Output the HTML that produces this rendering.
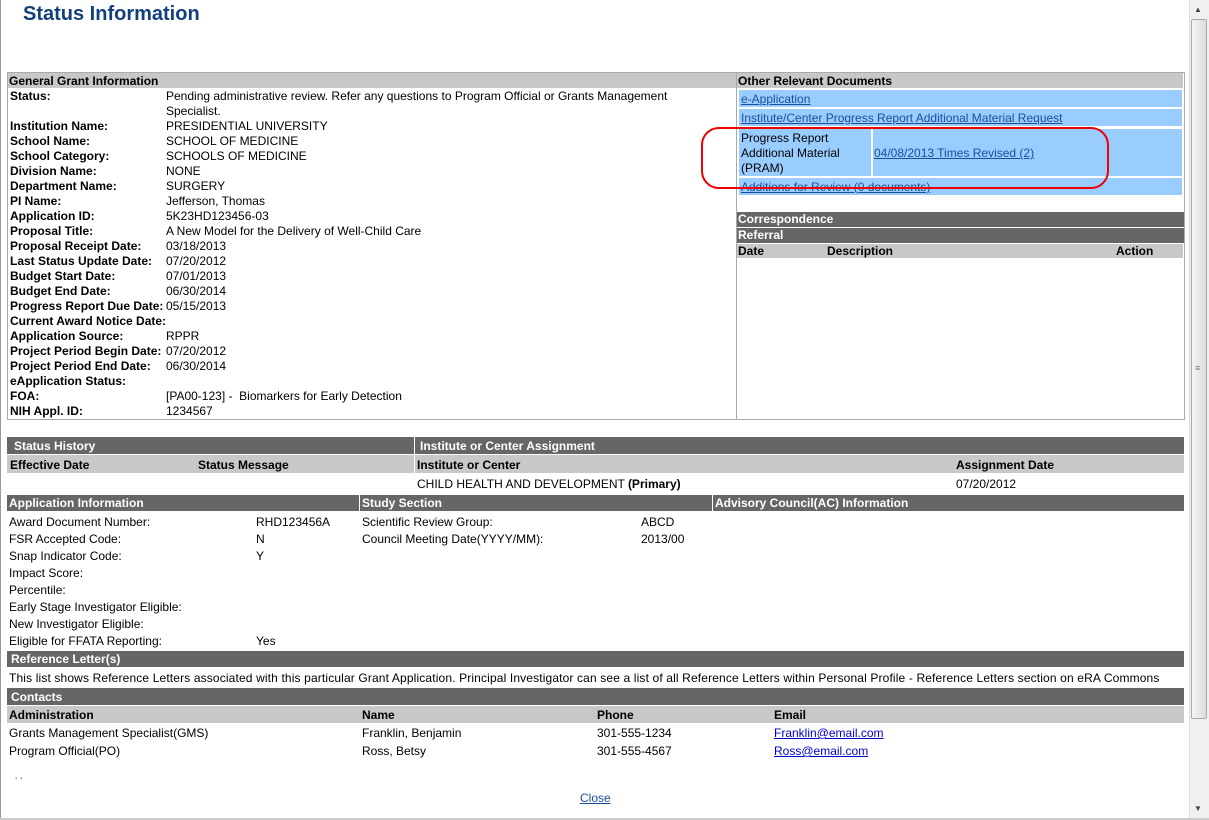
<!DOCTYPE html><html><head><style>
body{margin:0;width:1209px;height:820px;overflow:hidden;background:#fff;font-family:"Liberation Sans",Arial,sans-serif;font-size:12px;color:#000;position:relative}
.a{position:absolute;white-space:nowrap}
.b{font-weight:bold}
.lg{position:absolute;background:#c8c8c8}
.dg{position:absolute;background:#666;color:#fff;font-weight:bold}
.bl{position:absolute;background:#99ccff}
a{color:#1a4f9c;text-decoration:underline}
.lk{color:#0000cc}
</style></head><body>
<div class="a" style="left:0;top:0;width:1px;height:820px;background:#999"></div>
<div class="a" style="left:0;top:818px;width:1209px;height:2px;background:#ccc"></div>
<div class="a b" style="left:23px;top:3px;font-size:20px;color:#13407a">Status Information</div>
<div class="a" style="left:1189px;top:0;width:19px;height:818px;background:#f0f0f0;border-left:1px solid #ddd"></div>
<div class="a" style="left:1191px;top:19px;width:14px;height:698px;background:linear-gradient(90deg,#f4f4f4,#dcdcdc);border:1px solid #aaa;border-radius:2px"></div>
<div class="a" style="left:1194px;top:5px;font-size:8px;color:#444">▲</div>
<div class="a" style="left:1194px;top:804px;font-size:8px;color:#444">▼</div>
<div class="a" style="left:1195px;top:363px;font-size:9px;color:#777">≡</div>
<div class="a" style="left:7px;top:72px;width:1176px;height:346px;border:1px solid #aaa"></div>
<div class="a" style="left:736px;top:72px;width:1px;height:347px;background:#aaa"></div>
<div class="lg" style="left:8px;top:73px;width:728px;height:15px"></div>
<div class="lg" style="left:737px;top:73px;width:446px;height:15px"></div>
<div class="a b" style="left:9px;top:74px">General Grant Information</div>
<div class="a b" style="left:738px;top:74px">Other Relevant Documents</div>
<div class="a b" style="left:10px;top:89px;line-height:15px">Status:<br><br>Institution Name:<br>School Name:<br>School Category:<br>Division Name:<br>Department Name:<br>PI Name:<br>Application ID:<br>Proposal Title:<br>Proposal Receipt Date:<br>Last Status Update Date:<br>Budget Start Date:<br>Budget End Date:<br>Progress Report Due Date:<br>Current Award Notice Date:<br>Application Source:<br>Project Period Begin Date:<br>Project Period End Date:<br>eApplication Status:<br>FOA:<br>NIH Appl. ID:</div>
<div class="a" style="left:166px;top:89px;line-height:15px">Pending administrative review. Refer any questions to Program Official or Grants Management<br>Specialist.<br>PRESIDENTIAL UNIVERSITY<br>SCHOOL OF MEDICINE<br>SCHOOLS OF MEDICINE<br>NONE<br>SURGERY<br>Jefferson, Thomas<br>5K23HD123456-03<br>A New Model for the Delivery of Well-Child Care<br>03/18/2013<br>07/20/2012<br>07/01/2013<br>06/30/2014<br>05/15/2013<br><br>RPPR<br>07/20/2012<br>06/30/2014<br><br>[PA00-123] -&nbsp; Biomarkers for Early Detection<br>1234567</div>
<div class="bl" style="left:739px;top:90px;width:443px;height:17px"></div>
<div class="a" style="left:741px;top:92px"><a>e-Application</a></div>
<div class="bl" style="left:739px;top:109px;width:443px;height:17px"></div>
<div class="a" style="left:741px;top:111px"><a>Institute/Center Progress Report Additional Material Request</a></div>
<div class="bl" style="left:739px;top:129px;width:132px;height:47px"></div>
<div class="bl" style="left:873px;top:129px;width:309px;height:47px"></div>
<div class="a" style="left:741px;top:131px;line-height:15px">Progress Report<br>Additional Material<br>(PRAM)</div>
<div class="a" style="left:874px;top:146px"><a>04/08/2013 Times Revised (2)</a></div>
<div class="bl" style="left:739px;top:178px;width:443px;height:17px"></div>
<div class="a" style="left:741px;top:180px"><a>Additions for Review (0 documents)</a></div>
<div class="a" style="left:701px;top:127px;width:404px;height:58px;border:2px solid #e00;border-radius:18px"></div>
<div class="dg" style="left:737px;top:212px;width:446px;height:15px;padding-left:1px">Correspondence</div>
<div class="dg" style="left:737px;top:228px;width:446px;height:15px;padding-left:1px">Referral</div>
<div class="lg" style="left:737px;top:244px;width:446px;height:14px"></div>
<div class="a b" style="left:738px;top:244px">Date</div>
<div class="a b" style="left:827px;top:244px">Description</div>
<div class="a b" style="left:1116px;top:244px">Action</div>
<div class="dg" style="left:7px;top:437px;height:17px;padding:2px 0 0 7px;box-sizing:border-box;width:407px">Status History</div>
<div class="dg" style="left:415px;top:437px;width:769px;height:17px;padding:2px 0 0 5px;box-sizing:border-box">Institute or Center Assignment</div>
<div class="lg" style="left:7px;top:455px;width:407px;height:18px"></div>
<div class="lg" style="left:415px;top:455px;width:769px;height:18px"></div>
<div class="a b" style="left:10px;top:458px">Effective Date</div>
<div class="a b" style="left:198px;top:458px">Status Message</div>
<div class="a b" style="left:417px;top:458px">Institute or Center</div>
<div class="a b" style="left:956px;top:458px">Assignment Date</div>
<div class="a" style="left:417px;top:477px">CHILD HEALTH AND DEVELOPMENT <b>(Primary)</b></div>
<div class="a" style="left:956px;top:477px">07/20/2012</div>
<div class="dg" style="left:7px;top:495px;width:352px;height:16px;padding-left:2px;box-sizing:border-box;padding-top:1px">Application Information</div>
<div class="dg" style="left:360px;top:495px;width:352px;height:16px;padding-left:2px;box-sizing:border-box;padding-top:1px">Study Section</div>
<div class="dg" style="left:713px;top:495px;width:471px;height:16px;padding-left:2px;box-sizing:border-box;padding-top:1px">Advisory Council(AC) Information</div>
<div class="a" style="left:9px;top:514px;line-height:17px">Award Document Number:<br>FSR Accepted Code:<br>Snap Indicator Code:<br>Impact Score:<br>Percentile:<br>Early Stage Investigator Eligible:<br>New Investigator Eligible:<br>Eligible for FFATA Reporting:</div>
<div class="a" style="left:256px;top:514px;line-height:17px">RHD123456A<br>N<br>Y<br><br><br><br><br>Yes</div>
<div class="a" style="left:362px;top:514px;line-height:17px">Scientific Review Group:<br>Council Meeting Date(YYYY/MM):</div>
<div class="a" style="left:641px;top:514px;line-height:17px">ABCD<br>2013/00</div>
<div class="dg" style="left:7px;top:651px;width:1177px;height:16px;padding:1px 0 0 4px;box-sizing:border-box">Reference Letter(s)</div>
<div class="a" style="left:9px;top:671px;letter-spacing:0.14px">This list shows Reference Letters associated with this particular Grant Application. Principal Investigator can see a list of all Reference Letters within Personal Profile - Reference Letters section on eRA Commons</div>
<div class="dg" style="left:7px;top:688px;width:1177px;height:17px;padding:2px 0 0 4px;box-sizing:border-box">Contacts</div>
<div class="lg" style="left:7px;top:706px;width:1177px;height:17px"></div>
<div class="a b" style="left:9px;top:708px">Administration</div>
<div class="a b" style="left:362px;top:708px">Name</div>
<div class="a b" style="left:597px;top:708px">Phone</div>
<div class="a b" style="left:774px;top:708px">Email</div>
<div class="a" style="left:9px;top:724px;line-height:18px">Grants Management Specialist(GMS)<br>Program Official(PO)</div>
<div class="a" style="left:362px;top:724px;line-height:18px">Franklin, Benjamin<br>Ross, Betsy</div>
<div class="a" style="left:597px;top:724px;line-height:18px">301-555-1234<br>301-555-4567</div>
<div class="a" style="left:774px;top:724px;line-height:18px"><a class="lk">Franklin@email.com</a><br><a class="lk">Ross@email.com</a></div>
<div class="a" style="left:15px;top:776px;color:#aaa;font-size:10px;font-weight:bold">' '</div>
<div class="a" style="left:580px;top:791px"><a>Close</a></div>
</body></html>
